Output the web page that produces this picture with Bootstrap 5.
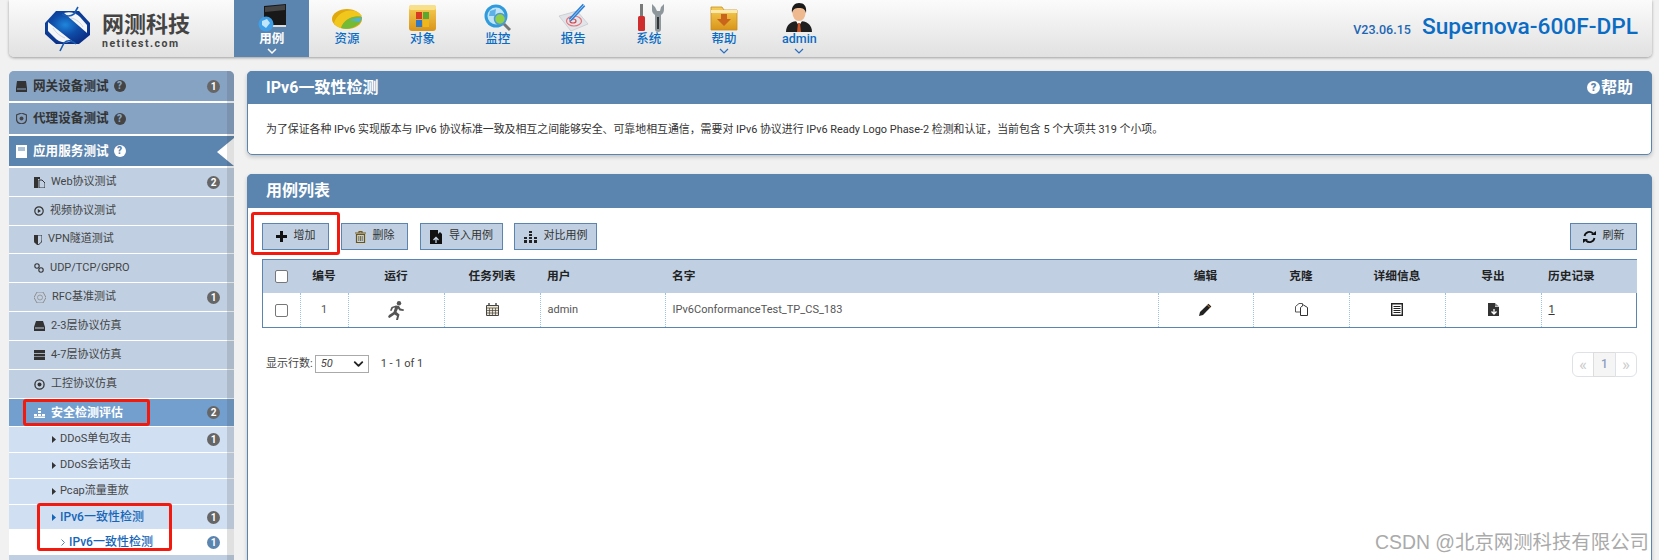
<!DOCTYPE html>
<html lang="zh">
<head>
<meta charset="utf-8">
<title>IPv6一致性检测</title>
<link href="https://cdn.jsdelivr.net/npm/bootstrap@5.3.0/dist/css/bootstrap.min.css" rel="stylesheet">
<style>
html,body{height:560px;overflow:hidden}
body{background:#f1f1f1;font-family:Roboto,"Noto Sans CJK SC",sans-serif;font-size:11px;color:#444;padding:0 7px 0 9px;position:relative}
.topbar{height:57px;background:linear-gradient(#fbfbfb,#e1e1e1);border-radius:0 0 5px 5px;box-shadow:0 1px 3px rgba(0,0,0,.35);margin-bottom:14px}
.brand{width:225px;padding-left:36px;gap:11px}
.brand-cn{font-size:22px;font-weight:700;color:#444;line-height:24px;margin-top:5px}
.brand-en{font-size:10.5px;font-weight:700;color:#444;letter-spacing:1.5px;line-height:12px;margin-top:1px}
.tab{width:75.4px;color:#0b6cc4;font-size:12.5px;font-weight:500;line-height:14px;padding-top:3px}
.tab svg.pic{width:32px;height:29px;display:block}
.tab.on{background:#5b85ae;color:#fff;font-weight:700}
.chev{height:9px;width:12px;display:block;margin-top:1px}
.ver{font-size:12.5px;font-weight:500;color:#1d66b4;margin-top:4px;margin-right:11px}
.prod{font-size:22.7px;color:#0b6cc4;font-weight:500;margin-right:14px;line-height:24px;margin-bottom:3px}
.side{width:225px;position:relative;height:489px;flex:none;background:#c0d0e2;border-radius:5px 5px 0 0;overflow:hidden}
.side .list-group-item{background:#c0d0e2;border:0;border-bottom:1px solid #fff;border-radius:0;padding:0 14px 0 25px;height:29px;font-size:11px;color:#444;gap:6px}
.side .list-group-item.r28{height:28px}
.side .list-group-item.top{background:#86a3c3;font-size:12.6px;font-weight:700;color:#333;padding-left:7px;height:32px;border-bottom-width:2px;gap:6px}
.side .list-group-item.top.t33{height:33px}
.side .list-group-item.cur{background:#5b85ae;color:#fff}
.side .list-group-item.sel{background:#739fcf;color:#fff;font-weight:700;font-size:12px}
.side .list-group-item.lv3{background:#d0dff2;padding-left:43px;height:26px;font-size:11px;gap:4px}
.side .list-group-item.lv3.r24{height:24px;border-bottom:0}
.side .list-group-item.act{color:#1566b9;font-weight:500;font-size:12px}
.side .list-group-item.lv4{background:#fff;padding-left:52px;color:#1566b9;font-weight:500;font-size:12px;height:26px;gap:4px}
.num{width:13px;height:13px;border-radius:50%;background:#666;color:#fff;font-size:10px;font-weight:700;line-height:13px;text-align:center;margin-left:auto;flex:none}
.num.blue{background:#5b85ae}
.qm{width:12px;height:12px;border-radius:50%;background:#444;color:#86a3c3;font-size:10px;font-weight:900;line-height:12px;text-align:center;flex:none;margin-left:-1px}
.cur .qm{background:#fff;color:#5b85ae}
.notch{position:absolute;right:0;top:67px;width:17px;height:28px;background:#fff;clip-path:polygon(0 50%,100% 0,100% 100%)}
.strip{position:absolute;top:0;right:0;bottom:0;width:7px;background:rgba(70,70,70,.17)}
.mark1{position:absolute;left:14px;top:328px;width:127px;height:27px;border:3px solid #f2190f;border-radius:3px}
.mark2{position:absolute;left:28px;top:432px;width:135px;height:48px;border:3px solid #f2190f;border-radius:3px}
.mainc{width:1405px;margin-left:13px}
.pane{background:#fff;border:1px solid #5b85ae;border-radius:5px;box-shadow:0 2px 4px rgba(0,0,0,.2)}
.pane-h{background:#5b85ae;color:#fff;font-size:16px;font-weight:700;margin:-1px -1px 0;padding:0 19px;border-radius:5px 5px 0 0;height:33px}
.pane-h .q{width:13px;height:13px;border-radius:50%;background:#fff;color:#5b85ae;font-size:11px;font-weight:900;line-height:13px;text-align:center;margin-right:1px}
.desc{height:50px;padding:3px 0 0 18px;font-size:10.9px;color:#333}
.pane2{margin-top:19px;height:400px;border-radius:5px 5px 0 0}
.pane2 .pane-h{height:34px}
.tools{padding:15px 14px 9px 14px;gap:12px}
.tbtn{height:27px;background:#c0d0e2;border:1px solid #5b85ae;border-radius:0;font-size:11px;color:#333;padding:0;gap:7px;--bs-btn-padding-y:0}
.tw67{width:67px}.tw83{width:83px}
.pull1{margin-left:-1px}
.addwrap{position:relative}
.mark3{position:absolute;left:-11px;top:-11px;width:89px;height:43px;border:3px solid #f2190f;border-radius:3px}
.tblbox{margin:0 14px;border:1px solid #5b85ae}
.case{table-layout:fixed;width:100%;margin:0;--bs-table-bg:transparent;font-size:11px;color:#555}
.case th{background:#c0d0e2;height:33px;padding:0 7px;vertical-align:middle;font-size:11.7px;font-weight:700;color:#222;border:0;text-align:center}
.case td{height:34px;padding:0 7px;vertical-align:middle;border:0;border-left:1px dotted #9cc2e8;text-align:center}
.case td:first-child{border-left:0}
.case .lft{text-align:left}
.case a{color:#333}
.form-check-input.cb{width:13px;height:13px;margin:0;border:1px solid #777;border-radius:2px;display:block;margin-inline:auto}
.foot{padding:24px 14px 0 18px}
.foot-l{margin-top:3px}
.pick{--bs-form-select-bg-img:url("data:image/svg+xml,%3csvg xmlns='http://www.w3.org/2000/svg' viewBox='0 0 16 16'%3e%3cpath fill='none' stroke='%23222' stroke-linecap='round' stroke-linejoin='round' stroke-width='3' d='m2 5 6 6 6-6'/%3e%3c/svg%3e");width:54px;height:18px;padding:0 0 0 5px;font-size:11px;font-style:italic;border:1px solid #aaa;border-radius:0;margin:0 12px 0 2px;background-size:11px 10px;background-position:right 4px center;color:#444}
.pgs{margin:0;--bs-pagination-padding-x:0;--bs-pagination-padding-y:0;--bs-pagination-border-color:#ddd;--bs-pagination-disabled-color:#ccc;--bs-pagination-disabled-bg:#fff;--bs-pagination-color:#888}
.pgs .page-link{width:22px;height:25px;line-height:22px;text-align:center;font-size:17px}
.pgs .page-item:nth-child(2) .page-link{background:#f5f5f5;color:#8e9ec0;font-size:12px;font-weight:500;width:23px}
.water{position:absolute;left:1375px;top:531px;font-family:"Liberation Sans","Noto Sans CJK SC",sans-serif;font-size:19.4px;color:#aaa;white-space:nowrap;line-height:22px}
</style>
</head>
<body>
<svg width="0" height="0" class="position-absolute">
<defs>
<linearGradient id="gy" x1="0" y1="0" x2="0" y2="1"><stop offset="0" stop-color="#f7cf55"/><stop offset="1" stop-color="#d9941a"/></linearGradient>
<radialGradient id="bl" cx=".45" cy=".42" r=".6"><stop offset="0" stop-color="#1f86dc"/><stop offset=".5" stop-color="#0f4da8"/><stop offset="1" stop-color="#0b2f86"/></radialGradient>
</defs>
</svg>

<header class="topbar d-flex align-items-stretch">
  <div class="brand d-flex align-items-center">
    <svg width="46" height="46" viewBox="0 0 46 46">
      <path d="M11 5H34L45 17V29L34 38H11L0 28V17Z" fill="url(#bl)"/>
      <path d="M19 7C25 5 31 7 35 11L42 19 42 27Z" fill="#f4f6f8"/>
      <path d="M3 16 27 35C20 38 13 36 9 31L3 25Z" fill="#f4f6f8"/>
      <path d="M33 1 29 8C25 11 20 10 17 8M15 45 19 37C23 33 28 35 31 38" stroke="#1b5bb0" stroke-width="1.600" fill="none"/>
      <path d="M26 12C31 13 36 17 38 21M8 22C11 27 15 30 20 32" stroke="#c9d3de" stroke-width=".9" fill="none"/>
    </svg>
    <div>
      <div class="brand-cn">网测科技</div>
      <div class="brand-en">netitest.com</div>
    </div>
  </div>
  <nav class="nav flex-nowrap">
    <a class="tab on d-flex flex-column align-items-center text-decoration-none">
      <svg class="pic" viewBox="0 0 32 29"><path d="M8 3 30 1V23L8 22Z" fill="#181818"/><path d="M9 4 29 2V7L9 9Z" fill="#444"/><path d="M14 22H30V24H14Z" fill="#ddd"/><circle cx="10" cy="21" r="7.500" fill="#3f9fe6"/><path d="M6 18 11 16 14 20 10 25 6 22Z" fill="#bfe6fb"/></svg>
      用例
      <svg class="chev" viewBox="0 0 12 9"><path d="M2 2 6 6 10 2" fill="none" stroke="#fff" stroke-width="1.500"/></svg>
    </a>
    <a class="tab d-flex flex-column align-items-center text-decoration-none">
      <svg class="pic" viewBox="0 0 32 29"><ellipse cx="16" cy="16" rx="15" ry="10" fill="#e0a90d"/><path d="M3 20C8 6 24 4 31 13 20 12 12 18 10 25 6 24 4 22 3 20Z" fill="#f2c71d"/><path d="M10 25C13 16 22 12 31 14 31 21 20 28 10 25Z" fill="#74ba35"/><path d="M18 17 31 14 29 19Z" fill="#4db4d8"/></svg>
      资源
    </a>
    <a class="tab d-flex flex-column align-items-center text-decoration-none">
      <svg class="pic" viewBox="0 0 32 29"><rect x="3" y="2" width="27" height="26" rx="3" fill="url(#gy)"/><rect x="3" y="2" width="27" height="5" rx="2" fill="#f8e08a"/><rect x="10" y="9" width="6" height="7" fill="#d93a24"/><rect x="17" y="9" width="6" height="7" fill="#5aa732"/><rect x="10" y="17" width="6" height="7" fill="#2d78c8"/><rect x="17" y="17" width="6" height="7" fill="#efb71a"/></svg>
      对象
    </a>
    <a class="tab d-flex flex-column align-items-center text-decoration-none">
      <svg class="pic" viewBox="0 0 32 29"><circle cx="14" cy="13" r="11.500" fill="#2f9bdc"/><circle cx="14" cy="13" r="8.500" fill="#bfe3f7"/><path d="M8 8 14 6 13 13 7 13Z" fill="#5db1e6"/><circle cx="18" cy="16" r="5.500" fill="#8fcf4a" stroke="#4f9ad0" stroke-width="1.500"/><path d="M22 21 28 27" stroke="#777" stroke-width="3"/></svg>
      监控
    </a>
    <a class="tab d-flex flex-column align-items-center text-decoration-none">
      <svg class="pic" viewBox="0 0 32 29"><path d="M2 13 20 8 31 21 14 28Z" fill="#e1e4e8" stroke="#c5c9cf" stroke-width=".8"/><ellipse cx="17" cy="18" rx="7.500" ry="5" fill="none" stroke="#e2747a" stroke-width="1.200"/><ellipse cx="16" cy="18" rx="3" ry="2" fill="none" stroke="#d8454c" stroke-width="1.200"/><path d="M13 17 27 2" stroke="#2f7fd6" stroke-width="3.500"/><path d="M13 17 27 2" stroke="#9fd0f5" stroke-width="1"/></svg>
      报告
    </a>
    <a class="tab d-flex flex-column align-items-center text-decoration-none">
      <svg class="pic" viewBox="0 0 32 29"><rect x="7" y="1" width="3" height="12" fill="#7a7a7a"/><rect x="5" y="13" width="7" height="15" rx="1.500" fill="#cf2d2d"/><path d="M19 1V7C19 10 21 11 22 12V26A3 3 0 0 0 28 26V12C30 11 31 9 31 6V1L28 4 27 8H24L22 4Z" fill="#8d979c"/><rect x="24" y="14" width="2" height="12" fill="#333"/></svg>
      系统
    </a>
    <a class="tab d-flex flex-column align-items-center text-decoration-none">
      <svg class="pic" viewBox="0 0 32 29"><path d="M3 4H14L16 7H29V27H3Z" fill="url(#gy)" stroke="#c58d22" stroke-width=".8"/><path d="M3 7H29V10H3Z" fill="#fbe9ae"/><path d="M13 11H19V16H23L16 23 9 16H13Z" fill="#c9651b"/></svg>
      帮助
      <svg class="chev" viewBox="0 0 12 9"><path d="M2 2 6 6 10 2" fill="none" stroke="#2a6fc0" stroke-width="1.200"/></svg>
    </a>
    <a class="tab d-flex flex-column align-items-center text-decoration-none">
      <svg class="pic" viewBox="0 0 32 29"><path d="M3 29C3 21 9 18 16 18 23 18 29 21 29 29Z" fill="#1f1f1f"/><path d="M13 18H19L16 23Z" fill="#fff"/><path d="M15 20H17L18 29H14Z" fill="#c8562a"/><ellipse cx="16" cy="10" rx="6.500" ry="8" fill="#eeb98f"/><path d="M9 10C8 3 12 0 16 0 21 0 24 3 23 10 22 6 20 5 16 5 12 5 10 6 9 10Z" fill="#1a1a1a"/></svg>
      admin
      <svg class="chev" viewBox="0 0 12 9"><path d="M2 2 6 6 10 2" fill="none" stroke="#2a6fc0" stroke-width="1.200"/></svg>
    </a>
  </nav>
  <div class="ms-auto d-flex align-items-center">
    <span class="ver">V23.06.15</span>
    <span class="prod">Supernova-600F-DPL</span>
  </div>
</header>

<div class="d-flex align-items-start">
  <aside class="side">
    <div class="list-group list-group-flush">
      <div class="list-group-item top d-flex align-items-center">
        <svg width="11" height="11" viewBox="0 0 11 11"><path d="M1 0H10L11 7V11H0V7Z" fill="#333"/><path d="M1 8H10" stroke="#86a3c3"/></svg>
        网关设备测试 <span class="qm">?</span><span class="num">1</span>
      </div>
      <div class="list-group-item top t33 d-flex align-items-center">
        <svg width="11" height="11" viewBox="0 0 11 11"><path d="M5.500 0 10.500 2V6C10.500 9 8 10.500 5.500 11 3 10.500.5 9 .5 6V2Z" fill="none" stroke="#444" stroke-width="1.300"/><circle cx="5.500" cy="5.500" r="2" fill="#444"/></svg>
        代理设备测试 <span class="qm">?</span>
      </div>
      <div class="list-group-item top cur d-flex align-items-center">
        <svg width="11" height="13" viewBox="0 0 11 13"><path d="M0 0H11V13H0Z" fill="#fff"/><path d="M2 3H9M2 5H9" stroke="#5b85ae"/></svg>
        应用服务测试 <span class="qm">?</span>
      </div>
      <div class="list-group-item d-flex align-items-center">
        <svg width="11" height="11" viewBox="0 0 11 11"><path d="M0 0H6V2H4V11H0Z" fill="#333"/><path d="M5 3H8L11 6V11H5Z" fill="none" stroke="#333"/></svg>
        Web协议测试<span class="num">2</span>
      </div>
      <div class="list-group-item d-flex align-items-center">
        <svg width="10" height="10" viewBox="0 0 10 10"><circle cx="5" cy="5" r="4.200" fill="none" stroke="#333" stroke-width="1.200"/><path d="M3.800 3 7 5 3.800 7Z" fill="#333"/></svg>
        视频协议测试
      </div>
      <div class="list-group-item r28 d-flex align-items-center">
        <svg width="8" height="10" viewBox="0 0 8 10"><path d="M0 0H8V5C8 8 5 9 4 10 3 9 0 8 0 5Z" fill="none" stroke="#333"/><path d="M0 0H4V10C3 9 0 8 0 5Z" fill="#333"/></svg>
        VPN隧道测试
      </div>
      <div class="list-group-item d-flex align-items-center">
        <svg width="10" height="10" viewBox="0 0 10 10"><circle cx="3" cy="3" r="2.200" fill="none" stroke="#333" stroke-width="1.100"/><circle cx="7" cy="7" r="2.200" fill="none" stroke="#333" stroke-width="1.100"/></svg>
        UDP/TCP/GPRO
      </div>
      <div class="list-group-item d-flex align-items-center">
        <svg width="12" height="11" viewBox="0 0 12 11"><path d="M3 0H9L12 5.500 9 11H3L0 5.500Z" fill="none" stroke="#8d8d8d"/><circle cx="6" cy="5.500" r="2.500" fill="none" stroke="#9a9a9a"/></svg>
        RFC基准测试<span class="num">1</span>
      </div>
      <div class="list-group-item d-flex align-items-center">
        <svg width="11" height="10" viewBox="0 0 11 10"><path d="M2 0H9L11 6V10H0V6Z" fill="#333"/><path d="M1 7H10" stroke="#c0d0e2"/></svg>
        2-3层协议仿真
      </div>
      <div class="list-group-item d-flex align-items-center">
        <svg width="11" height="10" viewBox="0 0 11 10"><rect width="11" height="3" fill="#333"/><rect y="3.800" width="11" height="2.600" fill="#333"/><rect y="7" width="11" height="3" fill="#333"/></svg>
        4-7层协议仿真
      </div>
      <div class="list-group-item d-flex align-items-center">
        <svg width="11" height="11" viewBox="0 0 11 11"><circle cx="5.500" cy="5.500" r="4.600" fill="none" stroke="#333" stroke-width="1.300"/><circle cx="5.500" cy="5.500" r="2" fill="#333"/></svg>
        工控协议仿真
      </div>
      <div class="list-group-item sel r28 d-flex align-items-center">
        <svg width="11" height="10" viewBox="0 0 11 10"><path d="M4 0H7V2H4ZM4 3H7V5H4ZM0 6H3V8H0V6ZM4 6H7V8H4ZM8 6H11V8H8ZM0 8.500H11V10H0Z" fill="#fff"/></svg>
        <span>安全检测评估</span><span class="num">2</span>
      </div>
      <div class="list-group-item lv3 d-flex align-items-center">
        <svg width="4" height="7" viewBox="0 0 4 7"><path d="M0 0 4 3.500 0 7Z" fill="#333"/></svg>
        DDoS单包攻击<span class="num">1</span>
      </div>
      <div class="list-group-item lv3 d-flex align-items-center">
        <svg width="4" height="7" viewBox="0 0 4 7"><path d="M0 0 4 3.500 0 7Z" fill="#333"/></svg>
        DDoS会话攻击
      </div>
      <div class="list-group-item lv3 d-flex align-items-center">
        <svg width="4" height="7" viewBox="0 0 4 7"><path d="M0 0 4 3.500 0 7Z" fill="#333"/></svg>
        Pcap流量重放
      </div>
      <div class="list-group-item lv3 r24 act d-flex align-items-center">
        <svg width="4" height="7" viewBox="0 0 4 7"><path d="M0 0 4 3.500 0 7Z" fill="#1566b9"/></svg>
        IPv6一致性检测<span class="num">1</span>
      </div>
      <div class="list-group-item lv4 d-flex align-items-center">
        <svg width="4" height="7" viewBox="0 0 4 7"><path d="M.5.500 3.500 3.500 .5 6.500" fill="none" stroke="#5b85ae"/></svg>
        IPv6一致性检测<span class="num blue">1</span>
      </div>
    </div>
    <div class="notch"></div>
    <div class="strip"></div>
    <div class="mark1"></div>
    <div class="mark2"></div>
  </aside>

  <main class="mainc">
    <section class="pane">
      <div class="pane-h d-flex align-items-center justify-content-between">
        <span>IPv6一致性检测</span>
        <span class="d-flex align-items-center"><span class="q">?</span>帮助</span>
      </div>
      <div class="desc d-flex align-items-center">为了保证各种 IPv6 实现版本与 IPv6 协议标准一致及相互之间能够安全、可靠地相互通信，需要对 IPv6 协议进行 IPv6 Ready Logo Phase-2 检测和认证，当前包含 5 个大项共 319 个小项。</div>
    </section>

    <section class="pane pane2">
      <div class="pane-h d-flex align-items-center">用例列表</div>
      <div class="tools d-flex">
        <div class="addwrap">
          <button class="btn tbtn tw67 d-flex align-items-center justify-content-center"><svg width="11" height="11" viewBox="0 0 11 11"><path d="M4 0H7V4H11V7H7V11H4V7H0V4H4Z" fill="#111"/></svg>增加</button>
          <div class="mark3"></div>
        </div>
        <button class="btn tbtn tw67 d-flex align-items-center justify-content-center"><svg width="11" height="12" viewBox="0 0 11 12"><path d="M0 2H11M4 2V.5H7V2" fill="none" stroke="#7a5a10" stroke-width="1.100"/><path d="M1.500 3.500H9.500V11.500H1.500Z" fill="none" stroke="#6b5510" stroke-width="1.200"/><path d="M3.800 5V10M5.500 5V10M7.200 5V10" stroke="#6b5510" stroke-width=".8"/></svg>删除</button>
        <button class="btn tbtn tw83 d-flex align-items-center justify-content-center"><svg width="12" height="14" viewBox="0 0 12 14"><path d="M0 0H8V4L10 2 12 4V14H0Z" fill="#111"/><path d="M6 13V8M3.500 10 6 7.500 8.500 10" fill="none" stroke="#c0d0e2" stroke-width="1.300"/></svg>导入用例</button>
        <button class="btn tbtn tw83 pull1 d-flex align-items-center justify-content-center"><svg width="13" height="12" viewBox="0 0 13 12"><path d="M5 0H8V2H5ZM5 3H8V5H5ZM0 6H3V8H0ZM5 6H8V8H5ZM10 6H13V8H10ZM0 9H3V12H0ZM5 9H8V12H5ZM10 9H13V12H10Z" fill="#222"/></svg>对比用例</button>
        <button class="btn tbtn tw67 ms-auto d-flex align-items-center justify-content-center"><svg width="13" height="12" viewBox="0 0 13 12"><path d="M1.500 5A5 5 0 0 1 10 2.500" fill="none" stroke="#111" stroke-width="1.800"/><path d="M8 4H13V0Z" fill="#111"/><path d="M11.500 7A5 5 0 0 1 3 9.500" fill="none" stroke="#111" stroke-width="1.800"/><path d="M5 8H0V12Z" fill="#111"/></svg>刷新</button>
      </div>
      <div class="tblbox">
        <table class="table case">
          <colgroup>
            <col width="37"><col width="48"><col width="96"><col width="96"><col width="125"><col width="493"><col width="95"><col width="96"><col width="96"><col width="96"><col width="96">
          </colgroup>
          <thead>
            <tr>
              <th><input class="form-check-input cb" type="checkbox" aria-label="全选"></th>
              <th>编号</th><th>运行</th><th>任务列表</th><th class="lft">用户</th><th class="lft">名字</th><th>编辑</th><th>克隆</th><th>详细信息</th><th>导出</th><th class="lft">历史记录</th>
            </tr>
          </thead>
          <tbody>
            <tr>
              <td><input class="form-check-input cb" type="checkbox" aria-label="选择"></td>
              <td>1</td>
              <td><svg width="16" height="19" viewBox="0 0 16 19"><circle cx="11" cy="2.300" r="2.200" fill="#555"/><path d="M8 4.500 3.500 6 2 9.500 3.500 10 5 7 7 6.500 5.500 11 1 14 0 16 1.500 17 6.500 13.500 9 15 8 19H10L11.500 13.500 8.500 11 10 7.500 11.500 9.500 15.500 10 16 8.500 12.500 7.500 11 5Z" fill="#555"/></svg></td>
              <td><svg width="13" height="13" viewBox="0 0 13 13"><path d="M.5 2.500H12.500V12.500H.5Z" fill="#f0e7d2" stroke="#444"/><path d="M.5 5H12.500M.5 7.500H12.500M.5 10H12.500M3.500 5V12.500M6.500 5V12.500M9.500 5V12.500" stroke="#444" stroke-width=".7"/><path d="M3 0V3M10 0V3" stroke="#444" stroke-width="1.400"/></svg></td>
              <td class="lft">admin</td>
              <td class="lft">IPv6ConformanceTest_TP_CS_183</td>
              <td><svg width="13" height="13" viewBox="0 0 13 13"><path d="M0 13 1 9 9.500 .8 12.300 3.500 4 12Z" fill="#222"/><path d="M8.500 2 11 4.500" stroke="#e58a2d"/></svg></td>
              <td><svg width="13" height="13" viewBox="0 0 13 13"><path d="M.5 3.500 4 .5H7.500V9H.5Z" fill="#fff" stroke="#555"/><path d="M5.500 4.500 8.500 2 12.500 4.500V12.500H5.500Z" fill="#fff" stroke="#333"/></svg></td>
              <td><svg width="12" height="13" viewBox="0 0 12 13"><path d="M.7.700H11.300V12.300H.7Z" fill="#fff" stroke="#222" stroke-width="1.400"/><path d="M2.500 3.500H9.500M2.500 5.500H9.500M2.500 7.500H9.500M2.500 9.500H9.500" stroke="#222"/></svg></td>
              <td><svg width="11" height="13" viewBox="0 0 11 13"><path d="M0 0H7V4H11V13H0Z" fill="#333"/><path d="M7 0 11 3.500H7Z" fill="#888"/><path d="M6 6V11M3.500 8.500 6 11 8.500 8.500" fill="none" stroke="#fff" stroke-width="1.300"/></svg></td>
              <td class="lft"><a href="#">1</a></td>
            </tr>
          </tbody>
        </table>
      </div>
      <div class="foot d-flex align-items-start justify-content-between">
        <div class="foot-l d-flex align-items-center">
          <span>显示行数:</span>
          <select class="form-select pick" aria-label="显示行数"><option>50</option></select>
          <span>1 - 1 of 1</span>
        </div>
        <ul class="pagination pgs">
          <li class="page-item disabled"><a class="page-link">«</a></li>
          <li class="page-item"><a class="page-link">1</a></li>
          <li class="page-item disabled"><a class="page-link">»</a></li>
        </ul>
      </div>
    </section>
  </main>
</div>
<div class="water">CSDN @北京网测科技有限公司</div>
<script src="https://cdn.jsdelivr.net/npm/bootstrap@5.3.0/dist/js/bootstrap.bundle.min.js"></script>
</body>
</html>
